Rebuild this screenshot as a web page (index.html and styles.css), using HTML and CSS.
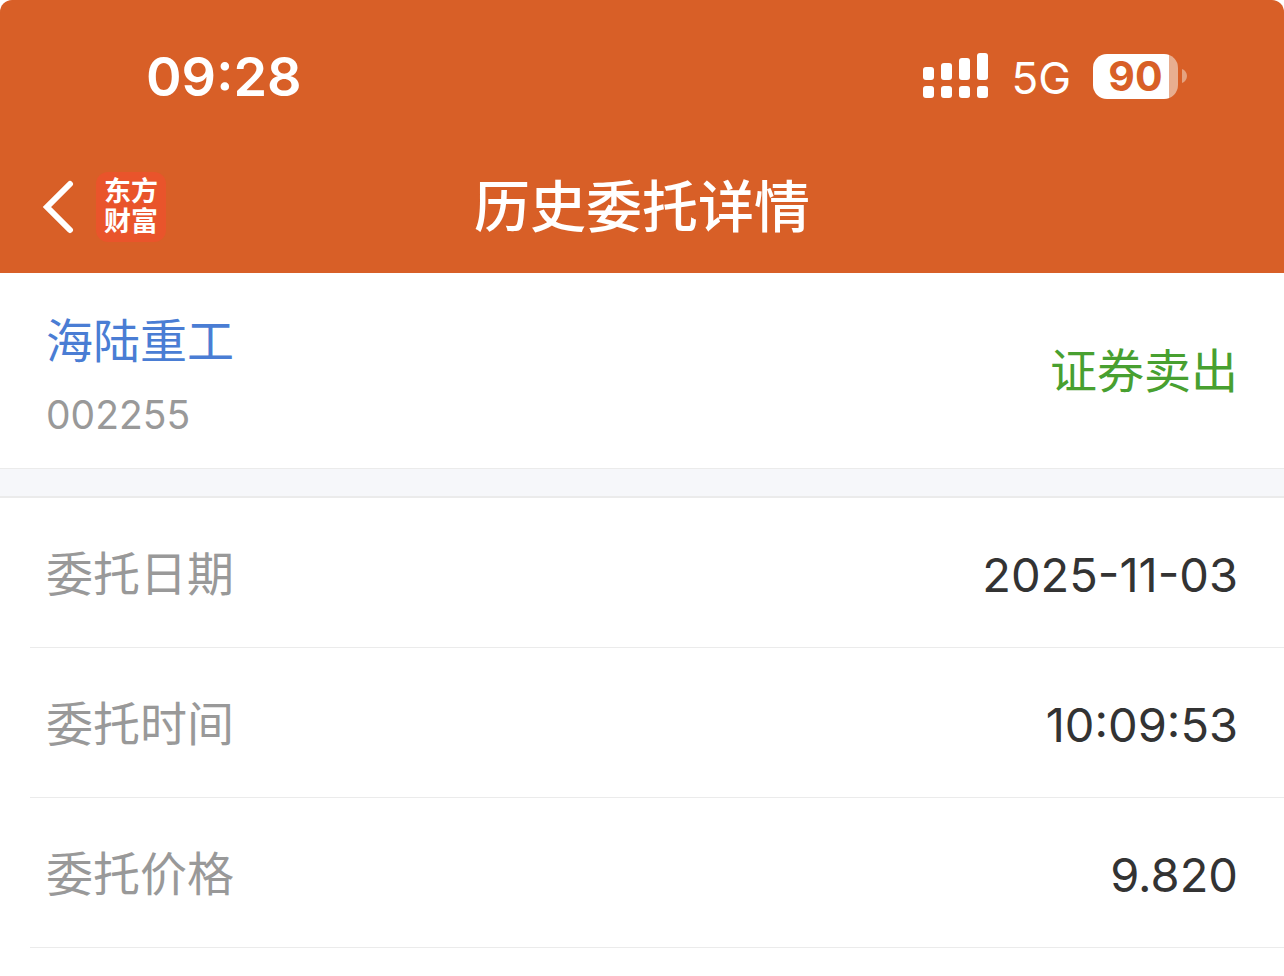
FILE: index.html
```
<!DOCTYPE html>
<html lang="zh-CN">
<head>
  <meta charset="UTF-8" />
  <meta name="viewport" content="width=device-width, initial-scale=1" />
  <title>历史委托详情</title>
  <link rel="stylesheet" href="styles.css">
</head>
<body>
  <header class="header">
    <div class="status-bar">
      <span class="time">09:28</span>
      <div class="status-icons">
        <svg class="signal" width="66" height="46" viewBox="0 0 66 46" fill="#fff" aria-hidden="true">
          <rect x="0" y="14" width="11" height="13" rx="3" />
          <rect x="18" y="10" width="11" height="17" rx="3" />
          <rect x="36" y="5" width="11" height="22" rx="3" />
          <rect x="54" y="0" width="11" height="27" rx="3" />
          <rect x="0" y="33" width="11" height="12" rx="3" />
          <rect x="18" y="33" width="11" height="12" rx="3" />
          <rect x="36" y="33" width="11" height="12" rx="3" />
          <rect x="54" y="33" width="11" height="12" rx="3" />
        </svg>
        <span class="network">5G</span>
        <div class="battery">
          <span class="battery-level">90</span>
          <svg width="5" height="14" viewBox="0 0 5 14" fill="#e5a27f" aria-hidden="true">
            <path d="M0 0 C3 1 5 4 5 7 C5 10 3 13 0 14 Z" />
          </svg>
        </div>
      </div>
    </div>
    <nav class="nav-bar">
      <div class="nav-left">
        <button class="back-btn" type="button" aria-label="返回">
          <svg width="32" height="54" viewBox="0 0 32 54" fill="none" stroke="#fff" stroke-width="6" stroke-linecap="round" aria-hidden="true">
            <path d="M28 4 L5 27 L28 50" />
          </svg>
        </button>
        <div class="logo"><span>东方</span><span>财富</span></div>
      </div>
      <h1 class="title">历史委托详情</h1>
    </nav>
  </header>

  <main>
    <section class="summary">
      <div class="stock">
        <a class="stock-name" href="#">海陆重工</a>
        <span class="stock-code">002255</span>
      </div>
      <span class="side">证券卖出</span>
    </section>

    <div class="divider"></div>

    <dl class="details">
      <div class="row"><dt>委托日期</dt><dd>2025-11-03</dd></div>
      <div class="row"><dt>委托时间</dt><dd>10:09:53</dd></div>
      <div class="row"><dt>委托价格</dt><dd>9.820</dd></div>
    </dl>
  </main>
</body>
</html>
```

FILE: styles.css
```
* {
  box-sizing: border-box;
}

body {
  margin: 0;
  background: #fff;
  color: #333;
  font-family: Inter, "Noto Sans CJK SC", sans-serif;
  font-size: 47px;
}

.header {
  background: #d85f27;
  color: #fff;
  border-radius: 12px 12px 0 0;
}

.status-bar {
  display: flex;
  justify-content: space-between;
  align-items: center;
  height: 140px;
  padding: 12px 97px 0 146px;
}

.time {
  font-size: 54px;
  font-weight: 600;
}

.status-icons {
  display: flex;
  align-items: center;
  gap: 22px;
}

.network {
  padding-top: 4px;
  font-size: 44px;
}

.battery {
  display: flex;
  align-items: center;
  gap: 4px;
}

.battery-level {
  width: 85px;
  height: 45px;
  border-radius: 14px;
  background: linear-gradient(to right, #fff 90%, #e8ae90 90%);
  color: #d85f27;
  font-size: 41px;
  font-weight: 700;
  line-height: 45px;
  text-align: center;
}

.nav-bar {
  display: grid;
  grid-template-columns: 1fr auto 1fr;
  align-items: center;
  height: 133px;
  padding: 0 42px;
}

.nav-left {
  display: flex;
  align-items: center;
  gap: 22px;
}

.back-btn {
  display: flex;
  padding: 0;
  border: none;
  background: none;
  cursor: pointer;
}

.logo {
  display: flex;
  flex-direction: column;
  align-items: center;
  justify-content: center;
  width: 70px;
  height: 70px;
  border-radius: 12px;
  background: #e9542b;
  font-size: 27px;
  font-weight: 700;
  line-height: 30px;
}

.title {
  margin: 0;
  padding-bottom: 8px;
  font-size: 56px;
  font-weight: 500;
}

.summary {
  display: flex;
  justify-content: space-between;
  align-items: center;
  padding: 34px 46px 25px;
}

.stock {
  display: flex;
  flex-direction: column;
  gap: 12px;
}

.stock-name,
.side,
dt {
  line-height: 68px;
}

.stock-name {
  color: #4a7dd4;
  text-decoration: none;
}

.stock-code {
  color: #999;
  font-size: 39px;
  line-height: 56px;
}

.side {
  padding-bottom: 8px;
  color: #48a030;
}

.divider {
  height: 30px;
  background: #f6f7fa;
  border-top: 1px solid #ebebeb;
  border-bottom: 2px solid #ebebeb;
}

.details {
  margin: 0;
}

.row {
  display: flex;
  justify-content: space-between;
  align-items: center;
  height: 150px;
  margin-left: 30px;
  padding: 3px 46px 0 16px;
  border-bottom: 1px solid #ebebeb;
}

dt {
  color: #999;
}

dd {
  margin: 0;
}
```
